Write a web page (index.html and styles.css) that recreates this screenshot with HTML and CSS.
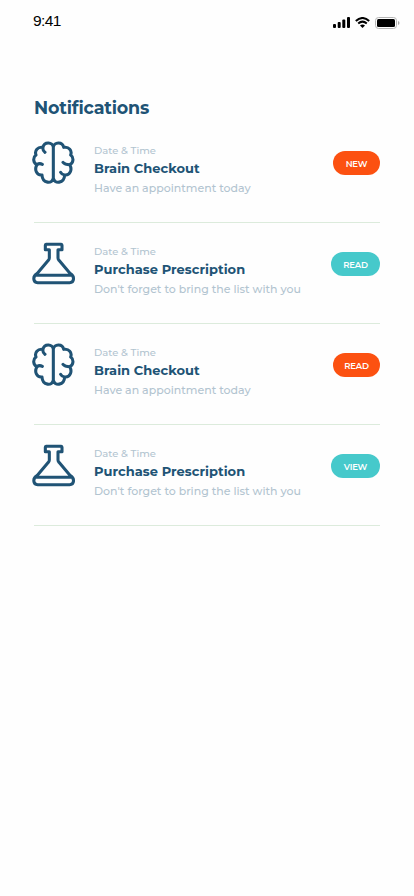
FILE: index.html
```html
<!DOCTYPE html>
<html lang="en">
<head>
<meta charset="utf-8">
<meta name="viewport" content="width=device-width, initial-scale=1">
<title>Notifications</title>
<link rel="stylesheet" href="styles.css">
</head>
<body>
<svg class="defs" aria-hidden="true">
  <symbol id="brain" viewBox="24 21 132 132">
    <path d="M88 38V134M88 40C87 23 60 22 57 40C41 37 31 50 36 63C26 70 27 87 39 92C30 107 38 125 54 123C55 149 86 151 88 132C90 151 121 149 122 123C138 125 146 107 137 92C149 87 150 70 140 63C145 50 135 37 119 40C116 22 89 23 88 40M57 40C56 46 58 52 63 55M39 92C43 89 49 88 55 91M137 92C129 92 121 90 117 85M122 123C116 122 112 119 110 115"/>
  </symbol>
  <symbol id="flask" viewBox="24 17 132 132">
    <path d="M66 24H112Q114 24 114 27V40H102V65C102 68 103 70 105 72L139 112C153 120 151 139 137 139H41C27 139 25 120 39 112L73 72C75 70 76 68 76 65V40H64V27Q64 24 66 24ZM37 117H141"/>
  </symbol>
</svg>
<header class="status">
  <span class="clock">9:41</span>
  <div class="indicators">
    <svg class="signal" viewBox="0 0 17 11"><rect y="7" width="3" height="4" rx="1"/><rect x="4.7" y="5" width="3" height="6" rx="1"/><rect x="9.3" y="2.5" width="3" height="8.5" rx="1"/><rect x="14" width="3" height="11" rx="1"/></svg>
    <svg class="wifi" viewBox="0 0 15 11"><path d="M.8 3.9Q7.5-1.9 14.2 3.9M3.2 6.5Q7.5 2.8 11.8 6.5"/><path class="dot" d="M5 8.5Q7.5 6.6 10 8.5L7.5 11Z"/></svg>
    <svg class="battery" viewBox="0 0 25 12"><rect class="shell" x=".5" y=".5" width="21" height="11" rx="3"/><rect x="2" y="2" width="18" height="8" rx="1.5"/><path class="cap" d="M23 4Q24.5 4.5 24.5 6T23 8Z"/></svg>
  </div>
</header>
<main class="page">
  <h1 class="title">Notifications</h1>
  <ul class="list">
    <li class="item">
      <svg class="icon"><use href="#brain"/></svg>
      <div class="copy"><p class="date">Date &amp; Time</p><h2 class="name">Brain Checkout</h2><p class="note">Have an appointment today</p></div>
      <span class="badge badge-orange">NEW</span>
    </li>
    <li class="item">
      <svg class="icon"><use href="#flask"/></svg>
      <div class="copy"><p class="date">Date &amp; Time</p><h2 class="name">Purchase Prescription</h2><p class="note">Don't forget to bring the list with you</p></div>
      <span class="badge badge-teal">READ</span>
    </li>
    <li class="item">
      <svg class="icon"><use href="#brain"/></svg>
      <div class="copy"><p class="date">Date &amp; Time</p><h2 class="name">Brain Checkout</h2><p class="note">Have an appointment today</p></div>
      <span class="badge badge-orange">READ</span>
    </li>
    <li class="item">
      <svg class="icon"><use href="#flask"/></svg>
      <div class="copy"><p class="date">Date &amp; Time</p><h2 class="name">Purchase Prescription</h2><p class="note">Don't forget to bring the list with you</p></div>
      <span class="badge badge-teal">VIEW</span>
    </li>
  </ul>
</main>
</body>
</html>
```
FILE: styles.css
```css
* { box-sizing: border-box; }
body { margin: 0; min-height: 896px; background: #fefefe; font-family: Montserrat, Inter, sans-serif; }
h1, h2, p, ul { margin: 0; padding: 0; }
.defs { display: none; }
.status { display: flex; justify-content: space-between; align-items: center; height: 44px; padding: 0 14px 0 33px; }
.clock { font: 15.5px/20px "Liberation Sans", sans-serif; color: #000; margin-top: -2px; letter-spacing: -.6px; }
.indicators { display: flex; align-items: center; gap: 5px; margin-top: 1px; }
.signal { width: 17px; height: 11px; }
.wifi { width: 15px; height: 11px; }
.wifi path { fill: none; stroke: #000; stroke-width: 2; }
.wifi .dot { fill: #000; stroke: none; }
.battery { width: 25px; height: 12px; }
.battery .shell { fill: none; stroke: #b5b5b5; }
.battery .cap { fill: #aaa; }
.page { padding: 52px 34px 0; }
.title { height: 26px; font-size: 17.5px; line-height: 23px; font-weight: 700; letter-spacing: -.18px; font-variant-ligatures: none; color: #205375; }
.list { list-style: none; }
.item { display: flex; align-items: flex-start; height: 101px; border-bottom: 1px solid #dcebdc; }
.icon { flex: none; width: 44px; height: 44px; margin: 19px 18px 0 -2px; fill: none; stroke: #205375; stroke-width: 9.2; stroke-linecap: round; stroke-linejoin: round; }
.copy { flex: 1; padding-top: 21px; white-space: nowrap; }
.date { font-size: 10px; line-height: 16px; font-weight: 500; color: #b2c4d0; }
.name { font-size: 13px; line-height: 18px; font-weight: 700; letter-spacing: .03px; color: #205375; }
.note { font-size: 11px; line-height: 23px; font-weight: 500; color: #b2c4d0; }
.badge { height: 24px; margin-top: 29px; border-radius: 12px; color: #fff; font-size: 8.5px; line-height: 26px; font-weight: 600; text-align: center; letter-spacing: -.2px; }
.badge-orange { width: 47px; background: #fc5111; }
.badge-teal { width: 49px; background: #46c9cb; }
```
